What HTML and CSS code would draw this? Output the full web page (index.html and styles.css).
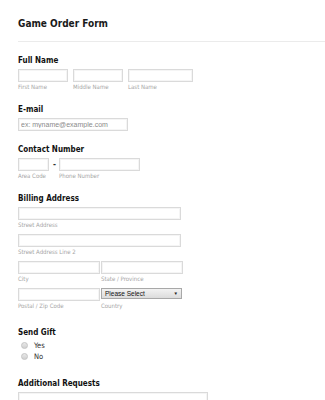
FILE: index.html
```html
<!DOCTYPE html>
<html lang="en">
<head>
    <meta charset="UTF-8">
    <meta name="viewport" content="width=device-width, initial-scale=1.0">
    <title>Game Order Form</title>
    <link rel="stylesheet" href="styles.css">
</head>
<body>
    <form class="form">
        <h1 class="form-title">Game Order Form</h1>
        <hr class="divider">

        <!-- Full name -->
        <div class="field">
            <div class="label">Full Name</div>
            <div class="row">
                <div class="part w50">
                    <input type="text">
                    <span class="sub">First Name</span>
                </div>
                <div class="part w50">
                    <input type="text">
                    <span class="sub">Middle Name</span>
                </div>
                <div class="part w65">
                    <input type="text">
                    <span class="sub">Last Name</span>
                </div>
            </div>
        </div>

        <!-- Email -->
        <div class="field">
            <div class="label">E-mail</div>
            <input type="text" class="email" placeholder="ex: myname@example.com">
        </div>

        <!-- Phone -->
        <div class="field">
            <div class="label">Contact Number</div>
            <div class="row phone">
                <div class="part w31">
                    <input type="text">
                    <span class="sub">Area Code</span>
                </div>
                <span class="dash">-</span>
                <div class="part w81">
                    <input type="text">
                    <span class="sub">Phone Number</span>
                </div>
            </div>
        </div>

        <!-- Address -->
        <div class="field address">
            <div class="label">Billing Address</div>
            <div class="part w163">
                <input type="text">
                <span class="sub">Street Address</span>
            </div>
            <div class="part w163">
                <input type="text">
                <span class="sub">Street Address Line 2</span>
            </div>
            <div class="row tight">
                <div class="part w82">
                    <input type="text">
                    <span class="sub">City</span>
                </div>
                <div class="part w82">
                    <input type="text">
                    <span class="sub">State / Province</span>
                </div>
            </div>
            <div class="row tight">
                <div class="part w82">
                    <input type="text">
                    <span class="sub">Postal / Zip Code</span>
                </div>
                <div class="part w81">
                    <div class="select">
                        <span>Please Select</span>
                        <span class="arrow">&#9660;</span>
                    </div>
                    <span class="sub">Country</span>
                </div>
            </div>
        </div>

        <!-- Gift -->
        <div class="field gift">
            <div class="label">Send Gift</div>
            <label class="radio"><span class="dot"></span>Yes</label>
            <label class="radio"><span class="dot"></span>No</label>
        </div>

        <!-- Requests -->
        <div class="field">
            <div class="label">Additional Requests</div>
            <textarea class="requests"></textarea>
        </div>
    </form>
</body>
</html>
```

FILE: styles.css
```css
body {
    margin: 0;
    padding: 0;
    background-color: #fff;
    font-family: 'DejaVu Sans Condensed', 'DejaVu Sans', Verdana, sans-serif;
    font-stretch: condensed;
    color: #111;
}
.form {
    padding: 17px 0 0 18px;
}
.form-title {
    margin: 0;
    font-size: 10px;
    line-height: 13px;
    font-weight: bold;
    color: #1a1a1a;
}
.divider {
    margin: 11px 0 14px 0;
    border: none;
    border-top: 1px solid #ebebeb;
    height: 0;
}
.field {
    margin-bottom: 14px;
}
.label {
    font-size: 8px;
    line-height: 10px;
    font-weight: bold;
    color: #111;
    margin-bottom: 3px;
}
.row {
    display: flex;
    gap: 5px;
    align-items: flex-start;
}
.row.tight {
    gap: 1px;
}
.part {
    display: flex;
    flex-direction: column;
}
input[type="text"], textarea {
    box-sizing: border-box;
    display: block;
    height: 13px;
    width: 100%;
    margin: 0;
    padding: 0 2px;
    border: 1px solid #dadada;
    box-shadow: inset 0 0 0 1px #f5f5f5;
    font-family: 'Liberation Sans', Arial, sans-serif;
    font-size: 7px;
    outline: none;
}
input::placeholder {
    color: #8a8a8a;
}
input.email {
    width: 110px;
}
textarea.requests {
    width: 190px;
    height: 40px;
    resize: none;
}
.sub {
    font-size: 6px;
    line-height: 8px;
    color: #a5a5a5;
    margin-top: 1px;
    white-space: nowrap;
}
.w31 { width: 31px; }
.w50 { width: 50px; }
.w65 { width: 65px; }
.w81 { width: 81px; }
.w82 { width: 82px; }
.w163 { width: 163px; }
.phone {
    gap: 0;
}
.phone .dash {
    font-size: 8px;
    font-weight: bold;
    line-height: 13px;
    margin: 0 3px 0 4px;
    color: #333;
}
.address {
    margin-bottom: 18px;
}
.address .part {
    margin-bottom: 5px;
}
.address .row .part {
    margin-bottom: 0;
}
.address .row {
    margin-bottom: 5px;
}
.select {
    box-sizing: border-box;
    height: 11px;
    border: 1px solid #a8a8a8;
    background: linear-gradient(#f2f2f2, #dcdcdc);
    display: flex;
    justify-content: space-between;
    align-items: center;
    padding: 0 3px;
    font-family: 'Liberation Sans', Arial, sans-serif;
    font-size: 6.5px;
    color: #111;
    margin-bottom: 2px;
}
.select .arrow {
    font-size: 4.5px;
    color: #222;
}
.gift {
    margin-bottom: 17px;
}
.gift .label {
    margin-bottom: 2px;
}
.radio {
    display: flex;
    align-items: center;
    height: 11px;
    padding-left: 3px;
    font-size: 7.5px;
    color: #333;
}
.dot {
    width: 5px;
    height: 5px;
    border-radius: 50%;
    border: 1px solid #c4c4c4;
    background: linear-gradient(#e8e8e8, #d0d0d0);
    margin-right: 6px;
}
```
